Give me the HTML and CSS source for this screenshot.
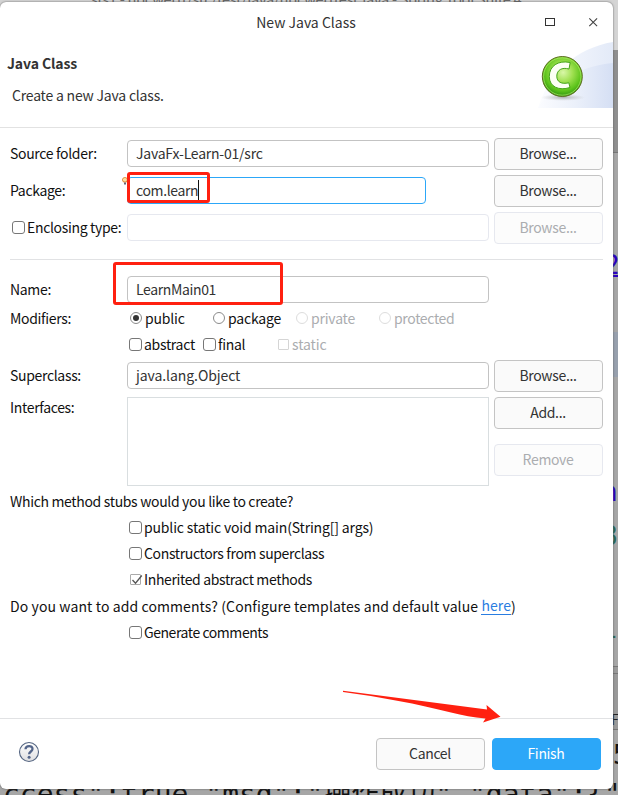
FILE: index.html
```html
<!DOCTYPE html>
<html lang="en">
<head>
<meta charset="utf-8">
<title>New Java Class</title>
<link rel="stylesheet" href="styles.css">
</head>
<body>
<div class="backdrop">
  <span class="bd bd-title">sts1 - npcwertt/src/test/java/npcwerttest.java - Spring Tool Suite 4</span>
  <span class="bd-strip strip-a"></span>
  <span class="bd-strip strip-b"></span>
  <span class="bd-strip strip-c"></span>
  <span class="bd-strip strip-d"></span>
  <span class="bd bd-two">2</span>
  <span class="bd bd-n">n</span>
  <span class="bd bd-eight">8</span>
  <span class="bd bd-dash">-</span>
  <span class="bd bd-f">F:</span>
  <span class="bd bd-five">5</span>
  <span class="bd bd-code">ccess":true,"msg":"操作成功","data":{"</span>
</div>
<main class="dialog">
  <header class="titlebar">
    <span class="title">New Java Class</span>
    <svg class="winbtns" width="60" height="16" viewBox="0 0 60 16">
      <rect x="5.5" y="4.500" width="9" height="7" fill="none" stroke="#333" stroke-width="1"/>
      <path d="M49.3 4.3l7.8 7.8M57.1 4.3l-7.8 7.8" fill="none" stroke="#444" stroke-width="1.1"/>
    </svg>
  </header>
  <section class="banner">
    <div class="banner-text">
      <h1>Java Class</h1>
      <p>Create a new Java class.</p>
    </div>
    <svg class="banner-art" width="75" height="66" viewBox="0 0 75 66">
      <defs>
        <linearGradient id="sky" x1="0" x2="1"><stop offset="0" stop-color="#fbfcff"/><stop offset=".5" stop-color="#ebf0fa"/><stop offset="1" stop-color="#d5dff4"/></linearGradient>
        <linearGradient id="sky2" x1="0" x2="1"><stop offset="0" stop-color="#fcfdff"/><stop offset="1" stop-color="#e3eaf8"/></linearGradient>
        <radialGradient id="ball" cx=".52" cy=".4" r=".6"><stop offset="0" stop-color="#d9f7a8"/><stop offset=".4" stop-color="#9fe050"/><stop offset=".75" stop-color="#5fc51c"/><stop offset="1" stop-color="#2f9410"/></radialGradient>
        <radialGradient id="shade"><stop offset="0" stop-color="#888" stop-opacity=".6"/><stop offset="1" stop-color="#aaa" stop-opacity="0"/></radialGradient>
      </defs>
      <path d="M0 66C10 32 38 6 75 0V66z" fill="url(#sky2)"/>
      <path d="M0 66C12 45 38 24 75 21V66z" fill="url(#sky)"/>
      <ellipse cx="25" cy="55.5" rx="22" ry="3.4" fill="url(#shade)"/>
      <circle cx="24.3" cy="34.5" r="20" fill="url(#ball)" stroke="#5f6e22" stroke-width="1"/>
      <circle cx="24.3" cy="34.5" r="18.7" fill="none" stroke="#b5ec6c" stroke-width="1" opacity=".65"/>
      <path d="M32.200 20.500L31 27C24 25 18.800 28 18.800 34.200 18.800 40 23.500 42.500 30.800 40.800L32 45.500C21 49 11.300 45 11.300 34.500 11.300 24 20 18 32.200 20.500z" fill="#fcfff4" stroke="#45a51a" stroke-width="1"/>
    </svg>
  </section>
  <section class="form">
    <div class="row">
      <span class="label">Source folder:</span><div class="field">JavaFx-Learn-01/src</div><button class="btn">Browse...</button>
    </div>
    <div class="row">
      <span class="label">Package:</span><div class="field active tight">com.learn<i class="caret"></i></div><button class="btn">Browse...</button>
      <svg class="bulb" width="6" height="9" viewBox="0 0 6 9"><path d="M1.500 5C-.6 2.200 1 .6 3 .6S6.200 2.200 4.500 5z" fill="#ffe0a0" stroke="#d9802a"/><path d="M2 5.500h2v2H2z" fill="#667"/></svg>
      <span class="mark mark-package"></span>
    </div>
    <div class="row">
      <span class="label check-label"><i class="box"></i>Enclosing type:</span><div class="field off"></div><button class="btn off">Browse...</button>
    </div>
    <hr>
    <div class="row name-row">
      <span class="label">Name:</span><div class="field tight">LearnMain01</div>
      <span class="mark mark-name"></span>
    </div>
    <div class="line modifiers">
      <span class="label">Modifiers:</span>
      <span class="opt w-public"><i class="radio on"></i>public</span>
      <span class="opt w-package"><i class="radio"></i>package</span>
      <span class="opt w-private off"><i class="radio"></i>private</span>
      <span class="opt off protected"><i class="radio"></i>protected</span>
    </div>
    <div class="line indent">
      <span class="opt w-abstract"><i class="box"></i>abstract</span>
      <span class="opt w-final"><i class="box"></i>final</span>
      <span class="opt off static"><i class="box small"></i>static</span>
    </div>
    <div class="row super-row">
      <span class="label">Superclass:</span><div class="field loose">java.lang.Object</div><button class="btn">Browse...</button>
    </div>
    <div class="list-row">
      <span class="label">Interfaces:</span><div class="list"></div>
      <div class="stack"><button class="btn">Add...</button><button class="btn off">Remove</button></div>
    </div>
    <div class="line question">Which method stubs would you like to create?</div>
    <div class="line indent"><span class="opt main-opt"><i class="box"></i>public static void main(String[] args)</span></div>
    <div class="line indent"><span class="opt stub"><i class="box"></i>Constructors from superclass</span></div>
    <div class="line indent"><span class="opt stub"><i class="box small checked"><svg width="14" height="13" viewBox="0 0 14 13"><path d="M2.500 6l3 3.200L11.800 1.500" fill="none" stroke="#555" stroke-width="1.300"/></svg></i>Inherited abstract methods</span></div>
    <div class="line comments">Do you want to add comments? (Configure templates and default value <a>here</a>)</div>
    <div class="line indent"><span class="opt generate"><i class="box"></i>Generate comments</span></div>
  </section>
  <footer class="footer">
    <svg class="help" width="22" height="22" viewBox="0 0 22 22">
      <defs><linearGradient id="hg" x2="0" y2="1"><stop offset="0" stop-color="#fff"/><stop offset="1" stop-color="#dedee0"/></linearGradient></defs>
      <circle cx="11" cy="11" r="9.500" fill="url(#hg)" stroke="#536481" stroke-width="1.100"/>
      <path d="M7.500 8.300C7.600 4 14.700 4 14.500 8c-.1 2.500-3.300 2.500-3.400 5.300" fill="none" stroke="#53658a" stroke-width="2.300"/><circle cx="11.100" cy="16.300" r="1.500" fill="#53658a"/>
    </svg>
    <button class="btn cancel">Cancel</button><button class="btn primary">Finish</button>
  </footer>
</main>
<svg class="arrow" width="160" height="40" viewBox="0 0 160 40"><path d="M1 5.700L145 24.500 144.500 20 158.500 31.700 141 37.500 143.500 33.500C131 32.500 121 30.500 109 27.500 76 19 38 12 1 7z" fill="#ff2010"/></svg>
</body>
</html>
```
FILE: styles.css
```css
* { box-sizing: border-box; }
body {
  margin: 0;
  width: 618px;
  height: 795px;
  overflow: hidden;
  position: relative;
  font: 14px/20px "Noto Sans CJK SC", "Noto Sans", sans-serif;
  letter-spacing: -0.33px;
  color: #111;
}
i { font-style: normal; display: block; flex: none; }
button { font: inherit; letter-spacing: inherit; margin: 0; padding: 0 1px 2px 0; }

.backdrop { position: absolute; inset: 0; background: #a6a6a6; overflow: hidden; letter-spacing: 0; }
.bd { position: absolute; white-space: pre; }
.bd-title { left: 91px; top: -11px; font-size: 14.67px; line-height: 20px; letter-spacing: -0.3px; color: #666; }
.backdrop::before { content: ""; position: absolute; left: 0; top: 0; width: 618px; height: 50px; background: #d4d4d4; }
.bd-strip { position: absolute; left: 613px; width: 5px; }
.strip-a { top: 50px; height: 103px; background: #8f8f8f; border-bottom: 1px solid #777; }
.strip-b { top: 332px; height: 45px; background: #97a0ad; }
.strip-c { top: 666px; height: 8px; background: #999; border-top: 1px solid #777; border-bottom: 1px solid #777; }
.strip-d { top: 674px; height: 56px; background: #999; border-bottom: 1px solid #777; }
.bd-two, .bd-n, .bd-eight, .bd-dash, .bd-five { font: 26px/30px "DejaVu Sans Mono", monospace; }
.bd-two { left: 604px; top: 252px; color: #2a00c0; border-bottom: 2px solid #2a00c0; line-height: 27px; height: 25px; }
.bd-n { left: 602px; top: 477px; color: #2a00c0; }
.bd-eight { left: 602px; top: 521px; color: #2a6655; }
.bd-dash { left: 604px; top: 620px; color: #2a6655; }
.bd-f { left: 611px; top: 709px; font-size: 14px; color: #222; }
.bd-five { left: 613px; top: 740px; color: #111; }
.bd-code { left: 3px; top: 780px; font: 28px/30px "DejaVu Sans Mono", "Noto Sans CJK SC", monospace; color: #111; }

.dialog {
  position: relative;
  width: 613px;
  height: 787px;
  margin-top: 2px;
  background: #fff;
  border-radius: 6px;
  box-shadow: 0 0 2px #555;
  display: flex;
  flex-direction: column;
}
.titlebar { height: 40px; display: flex; align-items: center; padding-left: 80px; color: #333; }
.title { flex: 1; text-align: center; letter-spacing: 0; }
.winbtns { margin-right: 13px; margin-left: 8px; }

.banner { height: 86px; border-bottom: 1px solid #e2e2e2; display: flex; justify-content: space-between; color: #333; }
.banner-text { padding: 11px 0 0 7px; }
h1 { font-size: 14px; line-height: 20px; margin: 0; font-weight: 700; letter-spacing: -0.1px; }
.banner-text p { margin: 12px 0 0 5px; letter-spacing: -0.2px; }

.form { padding: 10px 10px 0; display: flex; flex-direction: column; }
.row { height: 32px; margin-bottom: 5px; display: flex; align-items: center; position: relative; }
.label { width: 117px; flex: none; white-space: nowrap; }
.row > .label { margin-top: -2px; }
.field {
  width: 362px; height: 27px; flex: none;
  border: 1px solid #c3c3c3; border-radius: 4px;
  padding: 0 0 1px 8px; margin-right: 5px; margin-top: -1px;
  display: flex; align-items: center; color: #333; background: #fff;
  letter-spacing: -0.22px;
}
.field.tight { letter-spacing: -0.36px; }
.field.loose { letter-spacing: -0.08px; }
.field.active { width: 299px; margin-right: 68px; border-color: #2ca7f8; }
.field.off { border-color: #e6e8ef; }
.caret { width: 1px; height: 20px; background: #111; }
.btn {
  width: 109px; height: 32px; flex: none;
  background: #fafafa; border: 1px solid #c4c4c4; border-radius: 4px; color: #333;
}
.btn.off { border-color: #e6e8ef; background: #fcfcfc; color: #abadb0; }
.check-label { display: flex; align-items: center; padding-left: 2px; gap: 2px; }
.bulb { position: absolute; left: 112px; top: 2px; }
.mark { position: absolute; border: 3px solid #ff2010; border-radius: 3px; }
.mark-package { left: 117px; top: -3px; width: 83px; height: 31px; }
.mark-name { left: 103px; top: -12px; width: 170px; height: 43px; }
hr { width: 593px; height: 1px; border: 0; margin: 10px 0 14px; background: #e1e2e4; }

.name-row { margin-bottom: -1px; }
.line { height: 26px; display: flex; align-items: center; white-space: pre; }
.opt { display: flex; align-items: center; gap: 2px; letter-spacing: -0.3px; }
.opt.off { color: #abadb0; }
.indent { padding-left: 119px; }
.modifiers .opt { gap: 3px; letter-spacing: -0.2px; }
.modifiers .label { width: 120px; }
.modifiers .protected { letter-spacing: -0.35px; }
.w-public { width: 83px; }
.w-package { width: 83px; }
.w-private { width: 83px; }
.w-abstract { width: 74px; }
.w-final { width: 74px; }
.static { letter-spacing: -0.1px; }
.main-opt { letter-spacing: -0.16px; }
.stub { letter-spacing: -0.36px; }
.generate { letter-spacing: -0.44px; }
.box { width: 13px; height: 13px; border: 1px solid #777; border-radius: 3px; background: #fff; }
.box.small { width: 11px; height: 11px; border-color: #aaa; border-radius: 1px; margin: 0 1px; }
.off .box { border-color: #d5d5d5; }
.box.checked svg { display: block; margin: -1px; }
.radio { width: 12px; height: 12px; border: 1px solid #8b8b8b; border-radius: 50%; display: grid; place-items: center; }
.radio.on::after { content: ""; width: 6px; height: 6px; border-radius: 50%; background: #333; }
.off .radio { border-color: #ddd; }

.super-row { margin-top: 3px; }
.list-row { height: 89px; display: flex; }
.list { width: 362px; margin-right: 5px; border: 1px solid #d9dee0; }
.stack { display: flex; flex-direction: column; gap: 15px; }
.question { margin-top: 2px; }
.comments { height: 27px; letter-spacing: 0.1px; }
a { color: #2a7de1; border-bottom: 1px solid #2a7de1; line-height: 17px; }

.footer { margin-top: auto; height: 71px; border-top: 1px solid #e1e2e4; padding: 0 12px 0 18px; display: flex; align-items: center; }
.help { margin-top: -4px; }
.cancel { margin-left: auto; margin-right: 7px; }
.primary { background: #2ca7f8; border-color: #2ca7f8; color: #fff; }
.arrow { position: absolute; left: 342px; top: 685px; }
```
